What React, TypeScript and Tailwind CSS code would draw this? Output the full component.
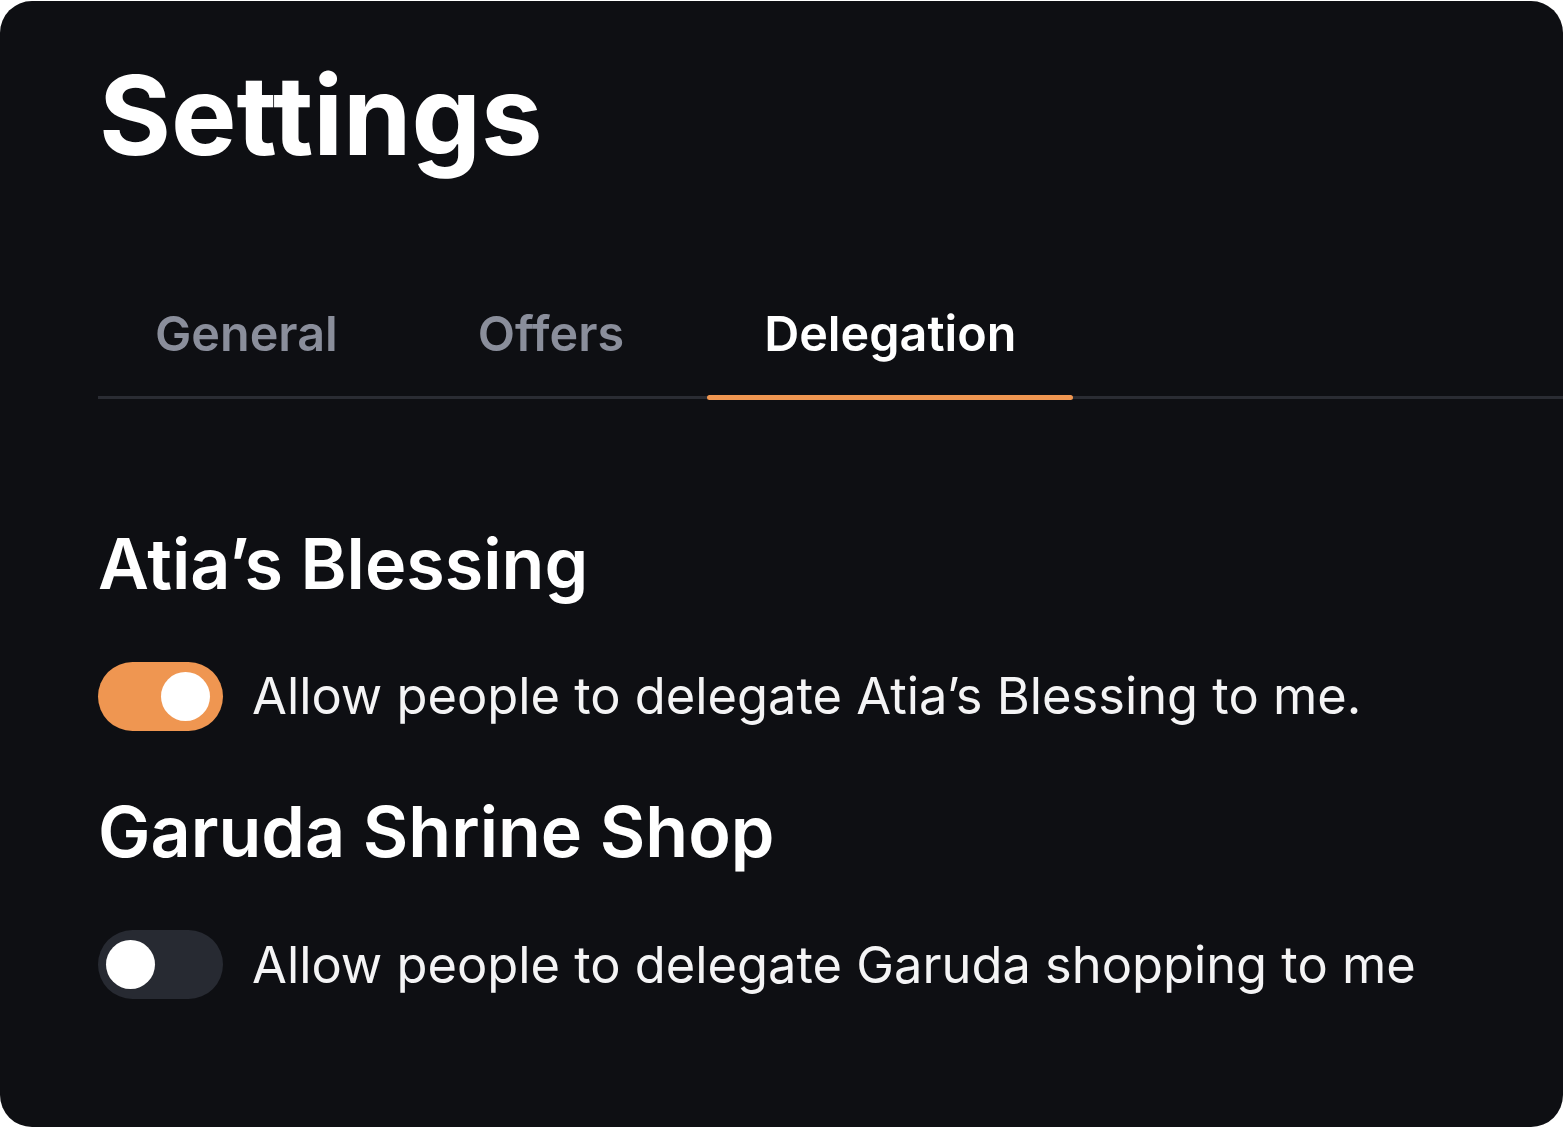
import { useState } from "react";

const tabs = ["General", "Offers", "Delegation"];

function Toggle({ on, onChange }: { on: boolean; onChange: () => void }) {
  return (
    <button
      type="button"
      onClick={onChange}
      className={
        "flex h-[69px] w-[125px] shrink-0 items-center rounded-full transition " +
        (on ? "justify-end bg-[#ef9651] pr-[13px]" : "justify-start bg-[#272a32] pl-[8px]")
      }
    >
      <span className="block h-[49px] w-[49px] rounded-full bg-white" />
    </button>
  );
}

export default function App() {
  const [tab, setTab] = useState("Delegation");
  const [atia, setAtia] = useState(true);
  const [garuda, setGaruda] = useState(false);

  return (
    <div className="min-h-screen bg-white pt-[1px]">
      <div
        className="h-[1126px] w-[1563px] overflow-hidden rounded-[32px] bg-[#0e0f13] text-white"
        style={{ fontFamily: "Inter, 'Noto Sans', sans-serif" }}
      >
        <h1 className="pl-[99px] pt-[48px] text-[110px] leading-[1.2] font-bold">Settings</h1>

        {/* tabs */}
        <div className="mt-[123px] ml-[98px] flex gap-[26px] border-b-[3px] border-[#2a2c33]">
          {tabs.map((t) => (
            <button
              key={t}
              type="button"
              onClick={() => setTab(t)}
              className={
                "relative -mb-[3px] px-[57px] pb-[34px] text-[48.5px] leading-tight font-semibold " +
                (tab === t ? "text-white" : "text-[#8a8e9b]")
              }
            >
              {t}
              {tab === t && (
                <span className="absolute bottom-[-1px] left-0 right-0 h-[5px] rounded-full bg-[#ef9651]" />
              )}
            </button>
          ))}
        </div>

        <div className="pl-[98px] pt-[121px]">
          <h2 className="text-[70px] leading-tight font-semibold">Atia’s Blessing</h2>
          <div className="mt-[51px] flex items-center gap-[29px]">
            <Toggle on={atia} onChange={() => setAtia(!atia)} />
            <span className="text-[50.6px] text-[#f4f4f5]">Allow people to delegate Atia’s Blessing to me.</span>
          </div>

          <h2 className="mt-[54px] text-[70px] leading-tight font-semibold">Garuda Shrine Shop</h2>
          <div className="mt-[51px] flex items-center gap-[29px]">
            <Toggle on={garuda} onChange={() => setGaruda(!garuda)} />
            <span className="text-[50.6px] text-[#f4f4f5]">Allow people to delegate Garuda shopping to me</span>
          </div>
        </div>
      </div>
    </div>
  );
}
